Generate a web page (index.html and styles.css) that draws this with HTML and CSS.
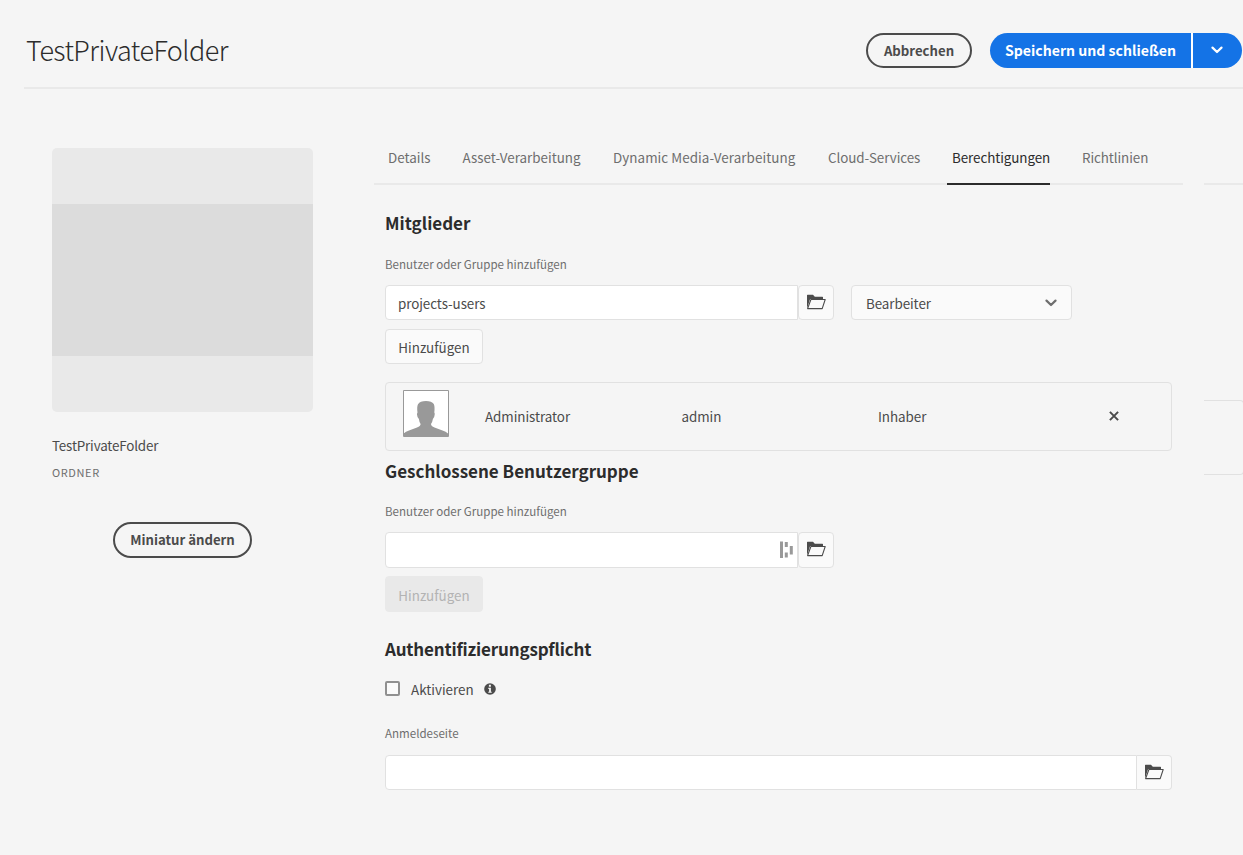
FILE: index.html
```
<!DOCTYPE html>
<html lang="de">
<head>
<meta charset="utf-8">
<title>TestPrivateFolder</title>
<link rel="stylesheet" href="styles.css">
</head>
<body>
<svg class="defs" width="0" height="0" aria-hidden="true">
  <symbol id="folder" viewBox="0 0 20 16">
    <path fill="#4b4b4b" d="M1 14.6V1.3Q1 .8 1.500.8H7l1.800 1.900h7.600q.6 0 .6.6V5H4.100z"/>
    <path fill="#fafafa" stroke="#4b4b4b" stroke-width="1.100" stroke-linejoin="round" d="M4.900 5.500H19.200L16.200 14.600H1.600z"/>
  </symbol>
  <symbol id="chevron" viewBox="0 0 12 8">
    <path fill="none" stroke="currentColor" stroke-width="2.200" stroke-linecap="round" stroke-linejoin="round" d="M1.500 1.600 6 6l4.500-4.400"/>
  </symbol>
</svg>
<header class="header">
  <h1 class="title">TestPrivateFolder</h1>
  <div class="actions">
    <button class="pill cancel">Abbrechen</button>
    <div class="split">
      <button class="save">Speichern und schließen</button>
      <button class="more" aria-label="Mehr"><svg width="12" height="8"><use href="#chevron"/></svg></button>
    </div>
  </div>
</header>
<main class="main">
  <aside class="card">
    <div class="thumb"><div class="thumb-band"></div></div>
    <div class="card-name">TestPrivateFolder</div>
    <div class="card-type">ORDNER</div>
    <button class="pill change">Miniatur ändern</button>
  </aside>
  <section class="panel">
    <nav class="tabs">
      <a class="tab t1">Details</a>
      <a class="tab t2">Asset-Verarbeitung</a>
      <a class="tab t3">Dynamic Media-Verarbeitung</a>
      <a class="tab t4">Cloud-Services</a>
      <a class="tab t5 active">Berechtigungen</a>
      <a class="tab t6">Richtlinien</a>
    </nav>
    <div class="form">
      <section class="members">
        <h2 class="heading h-members">Mitglieder</h2>
        <div class="label">Benutzer oder Gruppe hinzufügen</div>
        <div class="row">
          <div class="field"><span class="value">projects-users</span></div>
          <button class="browse" aria-label="Durchsuchen"><svg width="20" height="16"><use href="#folder"/></svg></button>
          <div class="select"><span class="select-text">Bearbeiter</span><svg width="12" height="8"><use href="#chevron"/></svg></div>
        </div>
        <button class="add">Hinzufügen</button>
        <div class="table">
          <svg class="avatar" width="46" height="47" viewBox="0 0 46 47">
            <path fill="#fff" stroke="#999" d="M.5.5h45v46H.5z"/>
            <path fill="#999" d="M1 46.500v-3.200q1.500-1.500 5-2.700l8-3q3.600-1.500 3.600-3.600-1.300-1.800-1.700-5-1.600-1-1.900-4.500 0-1.500.5-2-.8-6 .5-8.300 2-3.300 8-3.300 5.700 0 7.800 3.200 1.200 2.500.5 8.400.6.700.4 2-.3 3.500-1.800 4.500-.5 3.200-1.900 5 0 2.100 3.500 3.600l8 3q3.500 1.200 5.500 2.800v3.100z"/>
          </svg>
          <span class="cell c-name">Administrator</span>
          <span class="cell c-id">admin</span>
          <span class="cell c-role">Inhaber</span>
          <svg class="remove" width="10" height="10" viewBox="0 0 10 10"><path fill="none" stroke="#4b4b4b" stroke-width="2" d="M.9.900l8.200 8.200M9.100.900.9 9.100"/></svg>
        </div>
      </section>
      <section class="group">
        <h2 class="heading h-group">Geschlossene Benutzergruppe</h2>
        <div class="label">Benutzer oder Gruppe hinzufügen</div>
        <div class="row">
          <div class="field tall">
            <svg class="bars" width="13" height="18" viewBox="0 0 13 18"><path fill="#999" d="M0 .5h3V17H0zM4.800 1h3v5h-3zM4.800 11.500h3v5h-3zM9.800 5h3v8.500h-3z"/></svg>
          </div>
          <button class="browse tall" aria-label="Durchsuchen"><svg width="20" height="16"><use href="#folder"/></svg></button>
        </div>
        <button class="add disabled">Hinzufügen</button>
      </section>
      <section class="auth">
        <h2 class="heading h-auth">Authentifizierungspflicht</h2>
        <div class="check">
          <span class="box"></span><span class="check-text">Aktivieren</span>
          <svg class="info" width="12" height="12" viewBox="0 0 12 12"><circle cx="6" cy="6" r="5.800" fill="#4b4b4b"/><path fill="#f5f5f5" d="M4.900 1.800h2v1.900h-2zM4.300 4.800h2.600v3.900h.8v1.100H4.300V8.700h.8V5.900h-.8z"/></svg>
        </div>
        <div class="label l-login">Anmeldeseite</div>
        <div class="row">
          <div class="field wide"></div>
          <button class="browse joined" aria-label="Durchsuchen"><svg width="20" height="16"><use href="#folder"/></svg></button>
        </div>
      </section>
    </div>
  </section>
  <div class="next">
    <div class="next-tabs"></div>
    <div class="next-table"></div>
  </div>
</main>
</body>
</html>
```
FILE: styles.css
```
* { box-sizing: border-box; }
body {
  margin: 0;
  width: 1243px;
  height: 855px;
  overflow: hidden;
  background: #f5f5f5;
  color: #4b4b4b;
  font: 13.4px/20px "Noto Sans CJK SC", "Open Sans", sans-serif;
}
h1, h2 { margin: 0; }
button { margin: 0; padding: 0; font: inherit; color: inherit; white-space: nowrap; }
svg { display: block; flex: none; }
.defs { position: absolute; }
.header {
  display: flex;
  justify-content: space-between;
  height: 89px;
  margin-left: 24px;
  padding: 33px 1px 0 2px;
  border-bottom: 2px solid #e9e9e9;
}
.title { font-size: 27px; line-height: 33px; font-weight: 300; letter-spacing: -.55px; color: #2c2c2c; }
.actions { display: flex; gap: 18px; height: 35px; }
.pill {
  border: 2px solid #4b4b4b;
  border-radius: 18px;
  background: transparent;
  font-size: 13.2px;
  font-weight: 700;
}
.cancel { width: 106px; height: 35px; }
.split { display: flex; gap: 2px; background: linear-gradient(#fff, #fff) 201px 0 / 2px 35px no-repeat; }
.save, .more { height: 35px; border: 0; background: #1473e6; color: #fff; }
.save { width: 201px; padding-bottom: 1px; border-radius: 18px 0 0 18px; font-size: 14.1px; font-weight: 700; }
.more { display: flex; align-items: center; justify-content: center; width: 49px; padding: 0 2px 1px 0; border-radius: 0 18px 18px 0; }
.main { display: flex; }
.card { flex: none; width: 261px; margin: 59px 61px 0 52px; display: flex; flex-direction: column; }
.thumb { height: 264px; padding-top: 56px; border-radius: 5px; background: #e9e9e9; }
.thumb-band { height: 152px; background: #dcdcdc; }
.card-name { margin-top: 23px; letter-spacing: -.17px; }
.card-type { margin-top: 7px; font-size: 11px; color: #6e6e6e; letter-spacing: .6px; }
.change { width: 139px; height: 36px; margin-top: 40px; align-self: center; }
.panel { flex: none; width: 809px; margin-top: 44px; }
.tabs { display: flex; gap: 32px; height: 52px; padding-left: 14px; border-bottom: 2px solid #e9e9e9; color: #6e6e6e; }
.tab { flex: none; height: 52px; padding-top: 14px; white-space: nowrap; }
.t1 { width: 42.500px; }
.t2 { width: 118.500px; }
.t3 { width: 183px; letter-spacing: .06px; }
.t4 { width: 92px; letter-spacing: -.06px; }
.t5 { width: 103px; margin-left: -5px; padding-left: 5px; letter-spacing: -.07px; }
.t6 { width: 66px; letter-spacing: -.08px; }
.active { border-bottom: 2px solid #2c2c2c; color: #2c2c2c; }
.form { width: 787px; margin-left: 11px; }
.heading { font-size: 17px; line-height: 24px; font-weight: 700; color: #2c2c2c; }
.label { font-size: 11.550px; line-height: 18px; color: #6e6e6e; }
.members .heading { margin-top: 26px; }
.members .label { margin: 20px 0 12px; }
.row { display: flex; }
.field { display: flex; align-items: center; width: 413px; height: 35px; padding: 0 4px 0 12px; border: 1px solid #e1e1e1; border-radius: 4px 0 0 4px; background: #fff; }
.browse { display: flex; align-items: center; justify-content: center; width: 36px; height: 35px; padding-bottom: 2px; border: 1px solid #e1e1e1; border-radius: 4px; background: #fafafa; }
.field.tall, .browse.tall { height: 36px; }
.field.wide { width: 752px; }
.browse.joined { width: 35px; border-left: 0; border-radius: 0 4px 4px 0; }
.bars { margin-left: auto; }
.select { display: flex; align-items: center; justify-content: space-between; width: 221px; height: 35px; margin-left: 17px; padding: 0 14px; border: 1px solid #e1e1e1; border-radius: 4px; background: #fafafa; }
.select svg { color: #6e6e6e; }
.value, .select-text { letter-spacing: -.07px; }
.add { display: block; width: 98px; height: 35px; margin-top: 9px; padding-top: 1px; border: 1px solid #e1e1e1; border-radius: 4px; background: #fafafa; }
.add.disabled { height: 36px; margin-top: 8px; border-color: #e9e9e9; background: #e9e9e9; color: #b3b3b3; }
.table { display: flex; height: 69px; margin-top: 18px; padding-left: 17px; border: 1px solid #e1e1e1; border-radius: 4px; }
.avatar { margin: 7px 36px 0 0; }
.cell { margin-top: 23px; letter-spacing: -.05px; }
.c-name, .c-id { width: 196.500px; }
.c-role { width: 231px; }
.remove { margin-top: 28px; }
.group .heading { margin-top: 8px; }
.group .label { margin: 19px 0 12px; }
.auth .heading { margin-top: 25px; }
.h-auth { letter-spacing: -.17px; }
.check { display: flex; align-items: center; height: 20px; margin-top: 17px; }
.box { width: 15px; height: 15px; margin-right: 11px; border: 2px solid #909090; border-radius: 2px; background: #fafafa; }
.check-text { width: 73px; padding-top: 2px; }
.info { margin-top: 1px; }
.l-login { margin: 26px 0 13px; }
.next { flex: none; width: 60px; margin: 44px 0 0 21px; }
.next-tabs { height: 52px; border-bottom: 2px solid #e9e9e9; }
.next-table { width: 40px; height: 75px; margin-top: 215px; border: 1px solid #e1e1e1; border-left: 0; border-radius: 0 4px 4px 0; }
```
